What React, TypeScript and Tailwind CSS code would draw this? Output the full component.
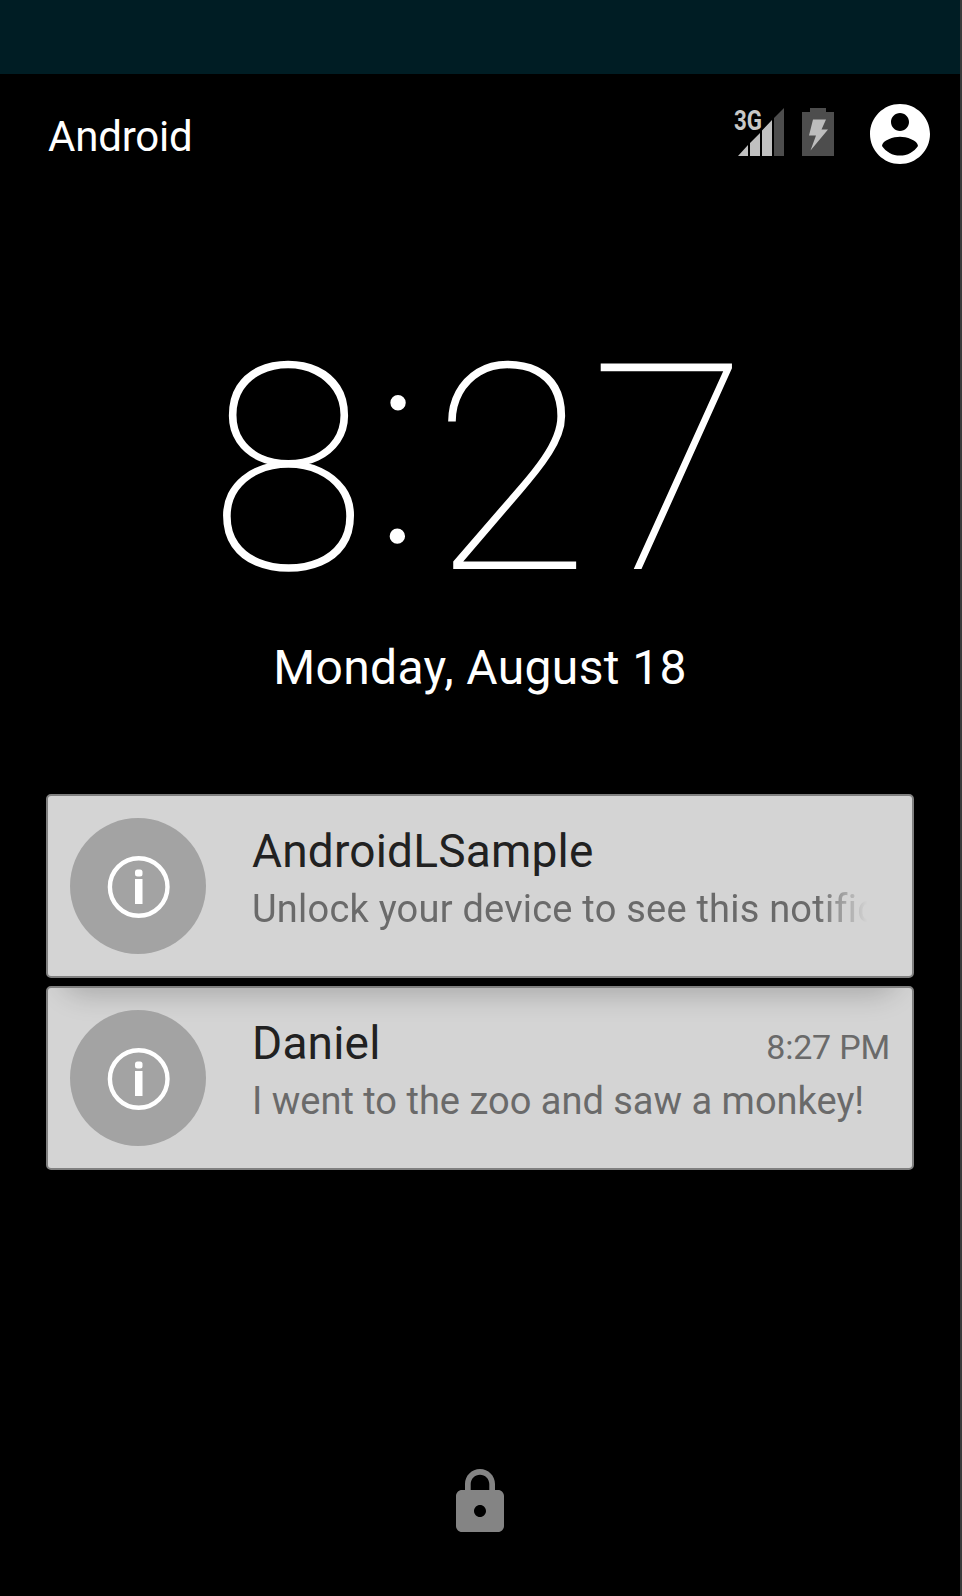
import type { ReactNode } from "react";

function InfoIcon() {
  return (
    <span className="flex size-[136px] shrink-0 items-center justify-center rounded-full bg-[#a3a3a3]">
      <svg viewBox="0 0 64 64" className="size-16" fill="none">
        <circle cx="32.700" cy="33" r="28.800" stroke="#fff" strokeWidth="4.400" />
        <rect x="29" y="15.500" width="7.500" height="7" rx="2.500" fill="#fff" />
        <rect x="29" y="25" width="7.500" height="25" fill="#fff" />
      </svg>
    </span>
  );
}

function SignalIcon() {
  return (
    <svg viewBox="0 0 52 52" className="size-[52px] overflow-visible">
      <text
        x="1"
        y="24"
        fontSize="28"
        fontWeight="700"
        fill="#c8c8c8"
        textLength="28"
        lengthAdjust="spacingAndGlyphs"
      >
        3G
      </text>
      <path d="M5 50 15 39V50ZM17 37 27 27V50H17ZM29 24.500 39 14V50H29Z" fill="#c0c0c0" />
      <path d="M41 12 51 2V50H41Z" fill="#4d4d4d" />
    </svg>
  );
}

function BatteryIcon() {
  return (
    <svg viewBox="0 0 32 48" className="h-12 w-8">
      <path d="M8 0H24V4H32V48H0V4H8Z" fill="#4d4d4d" />
      <path d="M11 11.500H24L19.500 21.500H26L8.500 42.500 14 27.500H7Z" fill="#bdbdbd" />
    </svg>
  );
}

function Card({
  title,
  time,
  shaded,
  children,
}: {
  title: string;
  time?: string;
  shaded?: boolean;
  children: ReactNode;
}) {
  return (
    <article className="relative flex h-[184px] overflow-hidden rounded-[5px] border-2 border-[#808080] bg-[#d4d4d4] pt-[22px] pl-[22px] pr-[22px]">
      {shaded && (
        <div className="absolute -top-10 left-[18px] right-[18px] h-10 rounded-full shadow-[0_0_28px_6px_rgba(0,0,0,0.21)]" />
      )}
      <div className="relative flex w-full">
        <InfoIcon />
        <div className="ml-[46px] min-w-0 flex-1 pt-[3px]">
          <div className="flex h-[60px] items-baseline justify-between">
            <h2 className="text-[46px] leading-[60px] tracking-[0.2px] text-[#212121]">{title}</h2>
            {time && (
              <time className="text-[34px] leading-none tracking-[-0.2px] text-[#6a6a6a]">{time}</time>
            )}
          </div>
          {children}
        </div>
      </div>
    </article>
  );
}

export default function App() {
  return (
    <main className="flex h-[1596px] w-[962px] flex-col border-r-2 border-[#3a3a3a] bg-black font-[Roboto,sans-serif] text-white">
      <div className="h-[74px] shrink-0 bg-[#001d24]" />
      <header className="flex h-[120px] shrink-0 items-center pl-[48px] pr-6">
        <span className="flex-1 pt-1 text-[42px] tracking-[-0.2px]">Android</span>
        <div className="mr-[30px] flex items-center gap-[17px] pb-1">
          <SignalIcon />
          <BatteryIcon />
        </div>
        <svg viewBox="0 0 24 24" className="size-[72px]" fill="#fff">
          <path d="M12 2C6.480 2 2 6.480 2 12s4.480 10 10 10 10-4.480 10-10S17.520 2 12 2zm0 3c1.660 0 3 1.340 3 3s-1.340 3-3 3-3-1.340-3-3 1.340-3 3-3zm0 14.200c-2.500 0-4.710-1.280-6-3.220.03-1.990 4-3.080 6-3.080 1.990 0 5.970 1.090 6 3.080-1.290 1.940-3.500 3.220-6 3.220z" />
        </svg>
      </header>
      <section className="flex h-[600px] shrink-0 flex-col items-center pt-[127px]">
        <div className="flex h-[300px] items-start pr-[3px] text-[289px] leading-[299px] font-thin">
          <span>8</span>
          <span className="-mt-[24px] ml-[6px] mr-[8px] text-[284px]">:</span>
          <span>2</span>
          <span>7</span>
        </div>
        <div className="mt-[17px] text-[48px] leading-[60px] tracking-[0.37px]">Monday, August 18</div>
      </section>
      <section className="ml-[46px] flex w-[868px] shrink-0 flex-col gap-2">
        <Card title="AndroidLSample">
          <p className="w-[615px] overflow-hidden text-[38px] leading-[56px] tracking-[0.22px] whitespace-nowrap text-[#6a6a6a] [mask-image:linear-gradient(to_right,#000_565px,transparent_615px)]">
            Unlock your device to see this notification
          </p>
        </Card>
        <Card title="Daniel" time="8:27 PM" shaded>
          <p className="text-[38px] leading-[56px] whitespace-nowrap text-[#6a6a6a]">
            I went to the zoo and saw a monkey!
          </p>
        </Card>
      </section>
      <footer className="mt-auto flex justify-center pb-[58px]">
        <svg viewBox="0 0 24 24" className="size-[72px]" fill="#848484">
          <path d="M18 8h-1V6c0-2.760-2.240-5-5-5S7 3.240 7 6v2H6c-1.100 0-2 .9-2 2v10c0 1.100.9 2 2 2h12c1.100 0 2-.9 2-2V10c0-1.100-.9-2-2-2zm-6 9c-1.100 0-2-.9-2-2s.9-2 2-2 2 .9 2 2-.9 2-2 2zm3.100-9H8.900V6c0-1.710 1.390-3.100 3.100-3.100 1.710 0 3.100 1.390 3.100 3.100v2z" />
        </svg>
      </footer>
    </main>
  );
}
